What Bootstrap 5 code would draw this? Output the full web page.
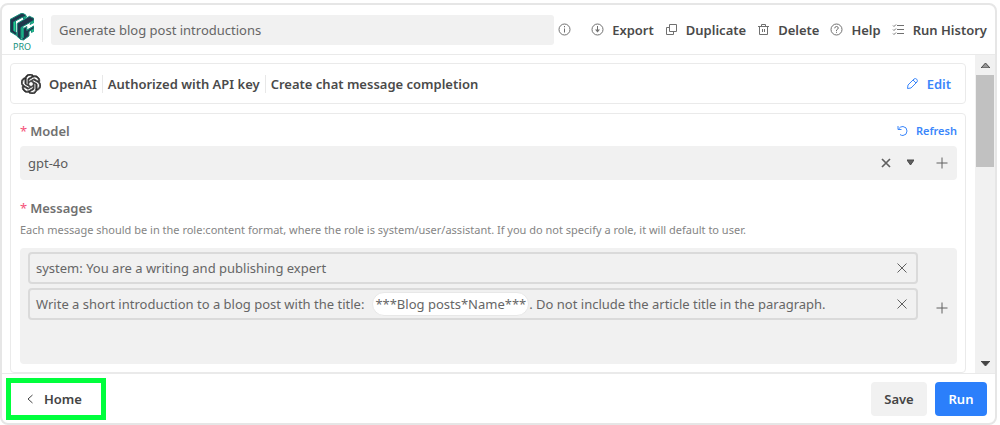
<!DOCTYPE html>
<html lang="en">
<head>
<meta charset="utf-8">
<meta name="viewport" content="width=device-width, initial-scale=1">
<title>Generate blog post introductions</title>
<link href="https://cdn.jsdelivr.net/npm/bootstrap@5.3.0/dist/css/bootstrap.min.css" rel="stylesheet">
<style>
  body { font-family: "Noto Sans", "Open Sans", sans-serif; font-size: 13px; line-height: 20px; color: #4a4a4a; background: #fff; }
  svg { display: block; fill: none; stroke: currentColor; }
  .frame { height: 100vh; padding: 3px 3px 0 0; }
  .window { border: 2px solid #e6e6e6; border-radius: 8px; background: #fff; }
  .topbar { height: 50px; padding: 0 8px; border-bottom: 1px solid #eaeaea; }
  .brand { width: 24px; font-size: 9px; line-height: 12px; color: #15917c; padding-top: 6px; }
  .divide { width: 1px; height: 24px; background: #e8e8e8; }
  .flow-name { height: 30px; padding: 0 8px; border: 0; border-radius: 3px; background: #f1f1f1; color: #666; }
  .tool { border: 0; background: none; padding: 0; color: #4a4a4a; font-weight: 600; white-space: nowrap; gap: 8px; }
  .tool svg { color: #707070; }
  .tools { gap: 11px; }
  .pane { padding: 8px 9px 0 8px; gap: 9px; }
  .panel { border: 1px solid #eaeaea; border-radius: 4px; }
  .account { height: 41px; padding: 0 14px 0 10px; font-weight: 600; }
  .account .divide { height: 18px; margin: 0 5px; }
  .blue, .tool.blue svg { color: #3a86fb; }
  .fields { padding: 7px 8px 0 9px; }
  .fields label, .group-name { color: #707070; font-weight: 600; }
  .group-name { margin-top: 18px; }
  .star { color: #f5527a; margin-right: 3px; font-weight: 400; }
  .grey { background: #f1f1f1; border-radius: 4px; }
  .picker { height: 34px; padding-left: 8px; margin-top: 5px; }
  .picker select { appearance: none; border: 0; background: none; padding: 0; color: #5c5c5c; }
  .glyph { border: 0; background: none; padding: 0; color: #606060; }
  .small-btn { font-size: 11px; line-height: 16px; }
  .hint { font-size: 11px; line-height: 16px; color: #858585; }
  .messages { height: 116px; padding: 4px 0 0 8px; margin-top: 10px; }
  .rows { gap: 4px; }
  .message { height: 32px; border: 2px solid #dadada; border-radius: 4px; padding: 0 9px 0 6px; color: #666; white-space: nowrap; }
  .chip { background: #fff; border: 1px solid #e8e8e8; border-radius: 12px; padding: 1px 2px; margin-left: 8px; line-height: 20px; }
  .plus-col { width: 31px; }
  .track { width: 20px; background: #f1f1f1; padding: 0 1px; }
  .thumb { height: 92px; background: #c1c1c1; }
  .arrow { height: 20px; }
  .bottombar { height: 50px; padding: 0 8px 0 4px; border-top: 1px solid #eaeaea; }
  .home { width: 100px; height: 42px; border: 5px solid #00ff3c; background: #fff; color: #444; font-weight: 600; padding: 0 0 0 16px; gap: 11px; }
  .action { height: 34px; border: 0; border-radius: 4px; font-weight: 600; padding: 0; }
  .save { width: 56px; background: #f1f1f1; color: #444; margin-right: 8px; }
  .run { width: 52px; background: #2b7ffb; color: #fff; }
</style>
</head>
<body>
<div class="frame">
<div class="window h-100 d-flex flex-column overflow-hidden">
  <header class="topbar d-flex align-items-center flex-shrink-0">
    <div class="brand d-flex flex-column align-items-center">
      <svg width="24" height="28" viewBox="0 0 24 28" stroke="none">
        <g fill="#22d18b"><path d="M3.300 9l2.200-1v12l-2.200-1zM11 15l2-1v11l-2-1zM8 21l3 1v3l-3-2z"/><path d="M15.500 5l1-2-3-1v4zM20 11.500l4-6.500v4.500zM17 17l7-4v5l-2.500 1.500v-3L17 19z"/></g>
        <g fill="#20354b"><path d="M0 6.500L12 0l3.500 1.800v1.700L12 4.500 3.500 9v8.500l3 2v3L0 18.500z"/><path d="M7.200 10.500L19.500 3.300 24 5.500v1.800L11 14.500v12.200L7.200 23.500z"/><path d="M13.500 15.500l3.300-2v4L24 13v2.500l-5 3v4.500l-5.500 4-2.500-.5 2.500-2z"/></g>
      </svg>
      <span>PRO</span>
    </div>
    <span class="divide mx-2"></span>
    <input class="flow-name flex-fill" type="text" aria-label="Name" value="Generate blog post introductions">
    <button class="tool ms-1" type="button" aria-label="Information"><svg width="13" height="13" viewBox="0 0 13 13"><circle cx="6.500" cy="6.500" r="5.500"/><path d="M6.500 5.500v4M6.500 3v1.300"/></svg></button>
    <nav class="tools d-flex align-items-center ms-3 ps-1">
      <button class="tool d-flex align-items-center" type="button"><svg width="13" height="13" viewBox="0 0 13 13"><circle cx="6.500" cy="6.500" r="5.500"/><path d="M6.500 3v5"/><path d="M4 6.500h5L6.500 9.500z" fill="currentColor" stroke="none"/></svg>Export</button>
      <button class="tool d-flex align-items-center" type="button"><svg width="13" height="13" viewBox="0 0 13 13"><path d="M4.500 1.500h7v7h-7zM4.500 4.500h-3v7h7v-3"/></svg>Duplicate</button>
      <button class="tool d-flex align-items-center" type="button"><svg width="13" height="13" viewBox="0 0 13 13"><path d="M1 3.500h11M4.500 3V1.500h4V3M2.500 3.500v8h8v-8M5.500 6v3M7.500 6v3"/></svg>Delete</button>
      <button class="tool d-flex align-items-center" type="button"><svg width="13" height="13" viewBox="0 0 13 13"><circle cx="6.500" cy="6.500" r="5.500"/><path d="M4.700 5.300q.2-1.800 1.800-1.800t1.800 1.500q0 1-1.800 2v1M6.500 8.800v1"/></svg>Help</button>
      <button class="tool d-flex align-items-center" type="button"><svg width="13" height="13" viewBox="0 0 13 13"><path d="M5 2.500h7M5 6.500h7M5 10.500h7M1 2.500l1 1 2-2M1 6.500l1 1 2-2M1 10.500l1 1 2-2"/></svg>Run History</button>
    </nav>
  </header>

  <div class="d-flex flex-fill overflow-hidden">
    <main class="pane d-flex flex-column flex-fill">
      <section class="panel account d-flex align-items-center flex-shrink-0">
        <svg class="me-2" width="20" height="20" viewBox="0 0 24 24" stroke="none"><path fill="#222" d="M22.282 9.821a5.985 5.985 0 0 0-.516-4.910 6.046 6.046 0 0 0-6.510-2.900A6.065 6.065 0 0 0 4.981 4.182a5.985 5.985 0 0 0-3.998 2.900 6.046 6.046 0 0 0 .743 7.097 5.980 5.980 0 0 0 .511 4.911 6.051 6.051 0 0 0 6.515 2.900A5.985 5.985 0 0 0 13.260 24a6.056 6.056 0 0 0 5.772-4.206 5.990 5.990 0 0 0 3.998-2.900 6.056 6.056 0 0 0-.748-7.073zM13.260 22.430a4.476 4.476 0 0 1-2.876-1.041l.142-.080 4.778-2.758a.795.795 0 0 0 .393-.682v-6.737l2.020 1.169a.071.071 0 0 1 .038.052v5.583a4.504 4.504 0 0 1-4.495 4.494zM3.600 18.304a4.471 4.471 0 0 1-.535-3.014l.142.085 4.783 2.759a.771.771 0 0 0 .780 0l5.843-3.369v2.332a.080.080 0 0 1-.033.062L9.740 19.950a4.499 4.499 0 0 1-6.140-1.646zM2.341 7.896a4.485 4.485 0 0 1 2.365-1.973V11.600a.766.766 0 0 0 .388.677l5.815 3.354-2.020 1.169a.076.076 0 0 1-.071 0l-4.830-2.787A4.504 4.504 0 0 1 2.341 7.872zm16.596 3.856l-5.833-3.387L15.119 7.200a.076.076 0 0 1 .071 0l4.830 2.791a4.494 4.494 0 0 1-.676 8.105v-5.678a.790.790 0 0 0-.407-.667zm2.011-3.023l-.142-.085-4.774-2.782a.776.776 0 0 0-.785 0L9.409 9.230V6.897a.066.066 0 0 1 .028-.061l4.830-2.787a4.499 4.499 0 0 1 6.680 4.660zM8.307 12.863l-2.020-1.164a.080.080 0 0 1-.038-.057V6.074a4.499 4.499 0 0 1 7.376-3.454l-.142.081L8.704 5.459a.795.795 0 0 0-.393.682zm1.097-2.365l2.602-1.500 2.607 1.500v2.999l-2.597 1.500-2.607-1.500z"/></svg>
        <span>OpenAI</span><span class="divide"></span><span>Authorized with API key</span><span class="divide"></span><span>Create chat message completion</span>
        <button class="tool blue d-flex align-items-center ms-auto" type="button"><svg width="13" height="13" viewBox="0 0 13 13"><path d="M1.500 11.500l.5-3.500 6-6q1.500-1 2.700.2t.3 2.800l-6 6zM7 3l3 3"/></svg>Edit</button>
      </section>

      <section class="panel fields flex-fill">
        <div class="d-flex align-items-center">
          <label for="model"><span class="star">*</span>Model</label>
          <button class="tool blue small-btn d-flex align-items-center ms-auto" type="button"><svg width="11" height="12" viewBox="0 0 11 12"><path d="M1 1v3.500h3.500M1.500 4Q3.500 1.300 6 1.500q4 .5 4 4.500t-4 4.500q-2 0-3-1"/></svg>Refresh</button>
        </div>
        <div class="picker grey d-flex align-items-center">
          <select id="model" class="flex-fill"><option>gpt-4o</option></select>
          <button class="glyph me-3" type="button" aria-label="Clear"><svg width="10" height="10" viewBox="0 0 10 10" stroke-width="1.700"><path d="M1 1l8 8M9 1l-8 8"/></svg></button>
          <svg class="me-2 pe-1" width="11" height="12" viewBox="0 0 7 12" stroke="none"><path d="M0 3h7L3.500 8z" fill="#606060"/></svg>
          <button class="glyph plus-col d-flex justify-content-center" type="button" aria-label="Add model value"><svg width="12" height="12" viewBox="0 0 12 12"><path d="M6 .5v11M.5 6h11"/></svg></button>
        </div>
        <div class="group-name"><span class="star">*</span>Messages</div>
        <div class="hint mt-1">Each message should be in the role:content format, where the role is system/user/assistant. If you do not specify a role, it will default to user.</div>
        <div class="messages grey d-flex">
          <div class="rows d-flex flex-column flex-fill">
            <div class="message d-flex align-items-center"><span>system: You are a writing and publishing expert</span><button class="glyph ms-auto" type="button" aria-label="Remove"><svg width="10" height="10" viewBox="0 0 10 10"><path d="M.5.5l9 9M9.500.5l-9 9"/></svg></button></div>
            <div class="message d-flex align-items-center"><span>Write a short introduction to a blog post with the title:</span><span class="chip">***Blog posts*Name***</span><span>. Do not include the article title in the paragraph.</span><button class="glyph ms-auto" type="button" aria-label="Remove"><svg width="10" height="10" viewBox="0 0 10 10"><path d="M.5.5l9 9M9.500.5l-9 9"/></svg></button></div>
          </div>
          <button class="glyph plus-col d-flex justify-content-center align-items-center ms-2" type="button" aria-label="Add message"><svg width="12" height="12" viewBox="0 0 12 12"><path d="M6 .5v11M.5 6h11"/></svg></button>
        </div>
      </section>
    </main>
    <div class="track d-flex flex-column flex-shrink-0">
      <div class="arrow d-flex align-items-center justify-content-center"><svg width="9" height="5" viewBox="0 0 9 5" stroke="none"><path d="M0 5h9L4.500 0z" fill="#999"/></svg></div>
      <div class="thumb"></div>
      <div class="arrow d-flex align-items-center justify-content-center mt-auto"><svg width="9" height="5" viewBox="0 0 9 5" stroke="none"><path d="M0 0h9L4.500 5z" fill="#444"/></svg></div>
    </div>
  </div>

  <footer class="bottombar d-flex align-items-center flex-shrink-0">
    <button class="home d-flex align-items-center" type="button"><svg width="6" height="10" viewBox="0 0 6 10"><path d="M5.500 1L1 5l4.500 4"/></svg>Home</button>
    <button class="action save ms-auto" type="button">Save</button>
    <button class="action run" type="button">Run</button>
  </footer>
</div>
</div>
<script src="https://cdn.jsdelivr.net/npm/bootstrap@5.3.0/dist/js/bootstrap.bundle.min.js"></script>
</body>
</html>
